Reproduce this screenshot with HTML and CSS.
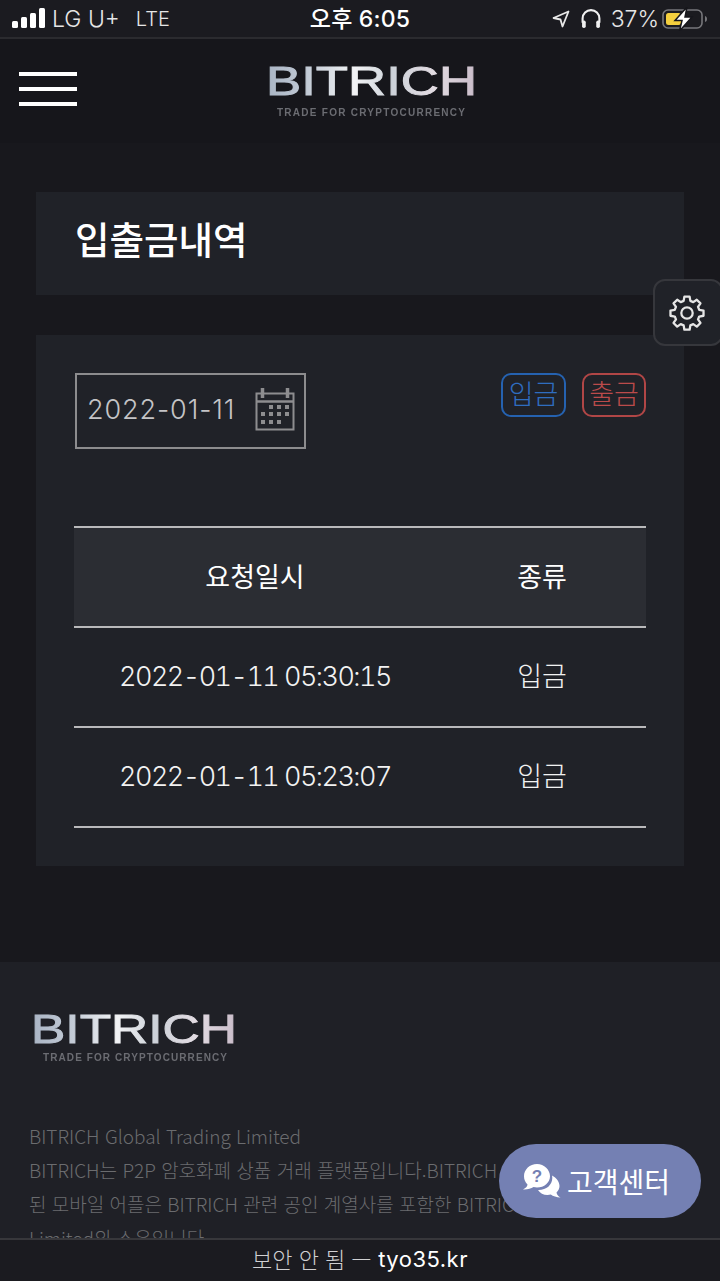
FILE: index.html
```html
<!DOCTYPE html>
<html lang="ko">
<head>
  <meta charset="UTF-8">
  <title>BITRICH 입출금내역</title>
  <link rel="stylesheet" href="styles.css">
</head>
<body>

<svg class="defs" width="0" height="0">
  <defs>
    <linearGradient id="chrome" x1="0" y1="0" x2="1" y2="0">
      <stop offset="0" stop-color="#a9b4c4"/>
      <stop offset="0.2" stop-color="#c3cbd6"/>
      <stop offset="0.42" stop-color="#f2f3f5"/>
      <stop offset="0.6" stop-color="#cdd2d9"/>
      <stop offset="0.8" stop-color="#e2dbe2"/>
      <stop offset="1" stop-color="#c9bcc9"/>
    </linearGradient>
  </defs>
</svg>

<div class="status">
  <div class="status-left">
    <svg class="signal" width="33" height="20" viewBox="0 0 33 20">
      <rect x="0" y="13" width="6" height="7" rx="1.5"/>
      <rect x="9" y="9" width="6" height="11" rx="1.5"/>
      <rect x="18" y="5" width="6" height="15" rx="1.5"/>
      <rect x="27" y="0" width="6" height="20" rx="1.5"/>
    </svg>
    <span>LG U+</span>
    <span class="lte">LTE</span>
  </div>
  <div class="status-time">오후 6:05</div>
  <div class="status-right">
    <svg width="18" height="18" viewBox="0 0 18 18" fill="none" stroke="#e8e8e8" stroke-width="1.8" stroke-linejoin="round"><path d="M16.500 1.500 1.500 8l7 1.500 2 7z"/></svg>
    <svg class="phones" width="22" height="21" viewBox="0 0 20 20" fill="none" stroke="#f0f0f0" stroke-width="2"><path d="M2 14V10a8 8 0 0 1 16 0v4"/><rect x="1.500" y="12" width="3.500" height="7" rx="1.600" fill="#f0f0f0" stroke="none"/><rect x="15" y="12" width="3.500" height="7" rx="1.600" fill="#f0f0f0" stroke="none"/></svg>
    <span class="pct">37%</span>
    <svg width="46" height="24" viewBox="0 0 46 24">
      <rect x="1" y="3" width="39" height="18" rx="5" fill="none" stroke="#77777b" stroke-width="1.600"/>
      <path d="M43 9c1.500.5 2 1.500 2 3s-.5 2.500-2 3z" fill="#77777b"/>
      <rect x="4" y="6" width="15" height="12" rx="2.500" fill="#f4cf3e"/>
      <path d="M25 0 13 13.500h7L17.500 24 30 10h-7z" fill="#fff" stroke="#16161b" stroke-width="1.500"/>
    </svg>
  </div>
</div>

<header class="topbar">
  <div class="burger"><i></i><i></i><i></i></div>
  <svg class="logo" width="212" height="54" viewBox="0 0 212 54">
    <text x="1" y="30" class="logo-name" textLength="211" lengthAdjust="spacingAndGlyphs">BITRICH</text>
    <text x="12" y="51" class="logo-sub" textLength="188" lengthAdjust="spacing">TRADE FOR CRYPTOCURRENCY</text>
  </svg>
</header>

<main class="content">
  <section class="card title-card">
    <h1>입출금내역</h1>
  </section>

  <section class="card list-card">
    <div class="filters">
      <div class="date-box">
        <span class="date-text">2022-01-11</span>
        <svg width="40" height="44" viewBox="0 0 40 44" fill="none" stroke="#8d8d8f">
          <rect x="1.500" y="6.500" width="37" height="36" stroke-width="2"/>
          <path d="M1.500 14.500h37" stroke-width="2.500"/>
          <path d="M7.500 1v10M32.500 1v10" stroke-width="3.500"/>
          <g fill="#8d8d8f" stroke="none">
            <rect x="14" y="18" width="4" height="4"/><rect x="22" y="18" width="4" height="4"/><rect x="30" y="18" width="4" height="4"/>
            <rect x="6" y="25" width="4" height="4"/><rect x="14" y="25" width="4" height="4"/><rect x="22" y="25" width="4" height="4"/><rect x="30" y="25" width="4" height="4"/>
            <rect x="6" y="33" width="4" height="4"/><rect x="14" y="33" width="4" height="4"/><rect x="22" y="33" width="4" height="4"/>
          </g>
        </svg>
      </div>
      <div class="types">
        <a class="type type-in">입금</a>
        <a class="type type-out">출금</a>
      </div>
    </div>

    <table class="history">
      <thead>
        <tr><th>요청일시</th><th>종류</th></tr>
      </thead>
      <tbody>
        <tr><td class="stamp">2022-01-11 05:30:15</td><td>입금</td></tr>
        <tr><td class="stamp">2022-01-11 05:23:07</td><td>입금</td></tr>
      </tbody>
    </table>
  </section>
</main>

<footer class="site-footer">
  <svg class="logo" width="212" height="54" viewBox="0 0 212 54">
    <text x="2" y="30" class="logo-name" textLength="206" lengthAdjust="spacingAndGlyphs">BITRICH</text>
    <text x="14" y="48" class="logo-sub" textLength="184" lengthAdjust="spacing">TRADE FOR CRYPTOCURRENCY</text>
  </svg>
  <p>BITRICH Global Trading Limited<br>
  BITRICH는 P2P 암호화폐 상품 거래 플랫폼입니다.BITRICH 모바일 앱 및 관련<br>
  된 모바일 어플은 BITRICH 관련 공인 계열사를 포함한 BITRICH Global Trading<br>
  Limited의 소유입니다.</p>
</footer>

<div class="settings-tab">
  <svg width="36" height="36" viewBox="0 0 24 24" fill="none" stroke="#e6e6e6" stroke-width="1.500" stroke-linejoin="round">
    <path d="M10.300 2.300h3.400l.5 2.800 1.900.8 2.300-1.600 2.400 2.400-1.600 2.300.8 1.900 2.800.5v3.400l-2.800.5-.8 1.900 1.600 2.300-2.400 2.400-2.300-1.600-1.900.8-.5 2.800h-3.400l-.5-2.800-1.900-.8-2.300 1.600-2.400-2.400 1.600-2.300-.8-1.900-2.800-.5v-3.400l2.800-.5.8-1.900-1.600-2.300 2.400-2.400 2.300 1.600 1.900-.8z" transform="translate(12 12) scale(1.020) translate(-12 -13)"/>
    <circle cx="12" cy="12" r="3.800"/>
  </svg>
</div>

<a class="help-pill">
  <svg width="38" height="36" viewBox="0 0 38 36">
    <path d="M14 1C6.800 1 1 6.500 1 13.200c0 3.300 1.300 6.200 3.500 8.400C4.200 23.500 3 25.200 0 26.500c4 .3 8-.7 10.500-2.400 1.100.3 2.300.4 3.500.4 7.200 0 13-5 13-11.300S21.200 1 14 1z" fill="#fff"/>
    <path d="M29 12.500c.2 1 .3 1.500.3 2.500 0 7-6 12-13.500 12l-.8 0c1.800 3 5.500 5 9.500 5 1.200 0 2.300-.2 3.300-.5 2.300 1.700 5.700 2.900 9.700 3-2.500-1.300-3.600-3-4-5 1.900-1.800 3-4 3-6.500 0-4.200-3-8-7.500-10.500z" fill="#fff"/>
    <text x="14" y="19" class="help-mark">?</text>
  </svg>
  <span>고객센터</span>
</a>

<div class="url-bar"><span class="url-note">보안 안 됨 —</span> <b>tyo35.kr</b></div>

</body>
</html>
```

FILE: styles.css
```css
* { box-sizing: border-box; }
html, body { margin: 0; height: 1281px; }
body { position: relative; overflow: hidden; background: #18181d; color: #fff; font-family: "Noto Sans CJK KR", "Noto Sans", sans-serif; font-weight: 400; }
.defs { position: absolute; }

/* status bar */
.status { height: 39px; background: #1b1b20; border-bottom: 2px solid #2b2b2f; display: grid; grid-template-columns: 1fr auto 1fr; align-items: center; padding: 0 12px; font-family: Inter, "Noto Sans CJK KR", sans-serif; color: #e6e6e6; }
.status-left { display: flex; align-items: center; font-size: 23px; font-weight: 300; }
.signal { fill: #fff; margin-right: 7px; margin-top: -2px; }
.lte { margin-left: 16px; font-size: 20px; }
.status-time { font-size: 23px; font-weight: 500; color: #fff; letter-spacing: .2px; margin-top: -3px; }
.status-right { display: flex; align-items: center; justify-content: flex-end; font-size: 23px; font-weight: 300; }
.status-right svg:first-child { margin-right: 10px; }
.pct { margin: 0 3px 0 9px; }

/* top bar */
.topbar { height: 104px; background: #16161b; display: flex; align-items: center; padding: 0 0 0 19px; position: relative; }
.burger { width: 58px; display: flex; flex-direction: column; gap: 11px; margin-top: -5px; }
.burger i { display: block; height: 4px; background: #fff; }
.topbar .logo { margin-left: 188px; margin-top: 2px; }
.logo { filter: blur(.4px); }
.logo-name { font-family: "Liberation Sans", sans-serif; font-size: 40px; fill: url(#chrome); stroke: url(#chrome); stroke-width: .9; }
.logo-sub { font-family: "Liberation Sans", sans-serif; font-weight: 700; font-size: 10px; fill: #6b6c72; }

/* content */
.content { padding: 49px 36px 96px; display: flex; flex-direction: column; gap: 40px; }
.card { background: #202228; }
.title-card { height: 103px; padding: 0 39px; display: flex; align-items: center; }
.title-card h1 { margin: 0; font-size: 37.500px; font-weight: 500; margin-top: -13px; }
.list-card { height: 531px; padding: 38px 38px 0; }
.filters { display: flex; justify-content: space-between; align-items: flex-start; height: 153px; padding-left: 1px; }
.date-box { width: 231px; height: 76px; border: 2px solid #8c8c8e; padding: 0 9px 0 10px; display: flex; align-items: center; justify-content: space-between; color: #c4c4c6; }
.date-box svg { margin-top: -4px; }
.date-text { font-family: Inter, sans-serif; font-size: 27px; font-weight: 300; letter-spacing: .9px; white-space: nowrap; margin-top: -4px; }
.types { display: flex; gap: 16px; }
.type { width: 65px; height: 44px; padding-bottom: 5px; border: 2px solid; border-radius: 10px; display: flex; align-items: center; justify-content: center; font-size: 27px; font-weight: 300; }
.type-in { color: #2f6dc0; border-color: #2562b0; }
.type-out { width: 64px; color: #bb4b4b; border-color: #b04646; }

/* table */
.history { width: 572px; border-collapse: collapse; table-layout: fixed; }
.history th, .history td { height: 100px; text-align: center; padding: 0 0 5px; border-top: 2px solid #b9b9bb; border-bottom: 2px solid #b9b9bb; font-size: 27px; }
.history th { background: #2b2d33; font-weight: 400; padding-bottom: 3px; }
.history td { font-weight: 300; color: #f2f2f2; }
.history th:last-child, .history td:last-child { padding-left: 2px; }
.history .stamp { font-family: Inter, sans-serif; font-size: 27px; font-variant-numeric: tabular-nums; letter-spacing: -1.550px; padding-bottom: 2px; }
.history th:first-child, .history td:first-child { width: 362px; }

/* footer */
.site-footer { height: 330px; background: #1f2026; padding: 51px 29px 0 29px; }
.site-footer .logo { display: block; }
.site-footer p { margin: 52px 0 0; font-size: 19px; line-height: 34px; font-weight: 300; color: #6b6c6f; white-space: nowrap; }

/* things floating over the page */
.settings-tab { position: absolute; left: 653px; top: 279px; width: 70px; height: 67px; background: #202228; border: 2px solid #36373c; border-radius: 12px; display: flex; align-items: center; padding-left: 14px; }
.help-pill { position: absolute; left: 499px; top: 1144px; width: 202px; height: 74px; border-radius: 37px; background: #7480b3; display: flex; align-items: center; padding-left: 24px; gap: 6px; font-size: 28px; }
.help-mark { font-family: "Liberation Sans", sans-serif; font-weight: 700; font-size: 17px; fill: #7480b3; text-anchor: middle; }
.url-bar { position: absolute; left: 0; right: 0; bottom: 0; height: 43px; padding-bottom: 3px; background: #1b1b20; border-top: 2px solid #37373b; display: flex; align-items: center; justify-content: center; gap: 7px; font-size: 22px; font-weight: 300; color: #d0d0d2; }
.url-note { margin-top: -3px; }
.url-bar b { font-family: Inter, sans-serif; font-weight: 400; color: #fff; letter-spacing: .5px; }
```
